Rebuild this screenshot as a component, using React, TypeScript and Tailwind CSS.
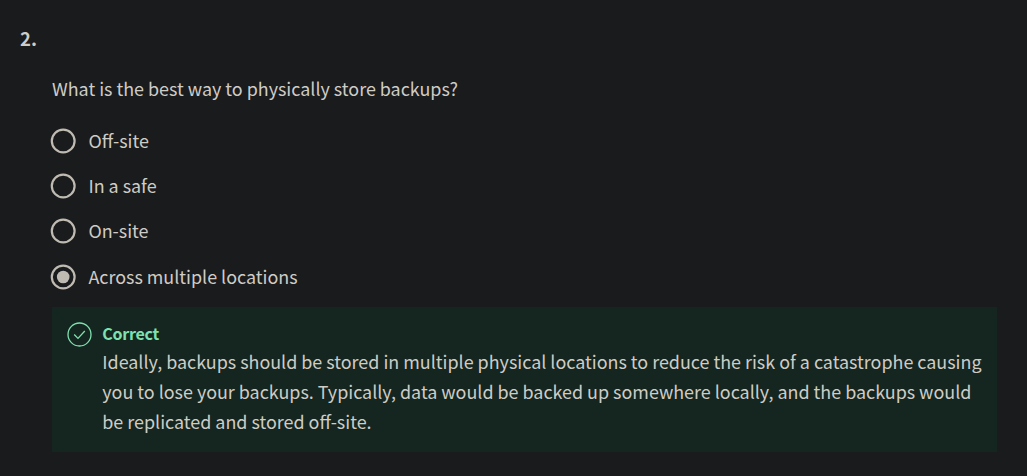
const options = [
  { label: 'Off-site', height: 'h-[45px]' },
  { label: 'In a safe', height: 'h-[45px]' },
  { label: 'On-site', height: 'h-[45px]' },
  { label: 'Across multiple locations', height: 'h-[47px]' },
];

function Radio({ checked }: { checked: boolean }) {
  return (
    <svg className="size-[26px] shrink-0" viewBox="0 0 26 26" fill="none">
      <circle cx="13.2" cy="13" r="11.4" stroke="#c0bbb2" strokeWidth="2.2" />
      {checked && <circle cx="13.2" cy="13" r="6.3" fill="#c0bbb2" />}
    </svg>
  );
}

export default function App() {
  return (
    <main className="h-[476px] w-[1027px] bg-[#1a1b1d] pt-[23px] pr-[30px] pl-5 font-['Noto_Sans_CJK_SC','Noto_Sans',sans-serif] text-[17.91px] leading-[30px] text-[#cfccc6]">
      <h3 className="text-[18.5px] font-bold">2.</h3>
      <section className="mt-5 pl-8">
        <p>What is the best way to physically store backups?</p>
        <div className="mt-[15px]">
          {options.map(({ label, height }, index) => (
            <label key={label} className={`-ml-[2px] flex items-center gap-[12.4px] ${height}`}>
              <Radio checked={index === 3} />
              <span className="pb-[2px]">{label}</span>
            </label>
          ))}
        </div>
        <div className="mt-[7px] flex h-[145px] gap-[10.3px] bg-[#14261f] pt-[13px] pl-[15px]">
          <svg className="mt-[2px] size-[25px] shrink-0" viewBox="0 0 25 25" fill="none" stroke="#7ee2b0">
            <circle cx="12.5" cy="12.5" r="11.5" strokeWidth="1.3" />
            <path d="m7.2 12.5 3.8 3.9L17.8 9" strokeWidth="1.3" />
          </svg>
          <div>
            <p className="h-[26px] text-[16px] leading-[27px] font-bold tracking-[-0.25px] text-[#7ee2b0]">Correct</p>
            <p className="whitespace-nowrap">
              Ideally, backups should be stored in multiple physical locations to reduce the risk of a catastrophe causing
              <br />
              you to lose your backups. Typically, data would be backed up somewhere locally, and the backups would
              <br />
              be replicated and stored off-site.
            </p>
          </div>
        </div>
      </section>
    </main>
  );
}
